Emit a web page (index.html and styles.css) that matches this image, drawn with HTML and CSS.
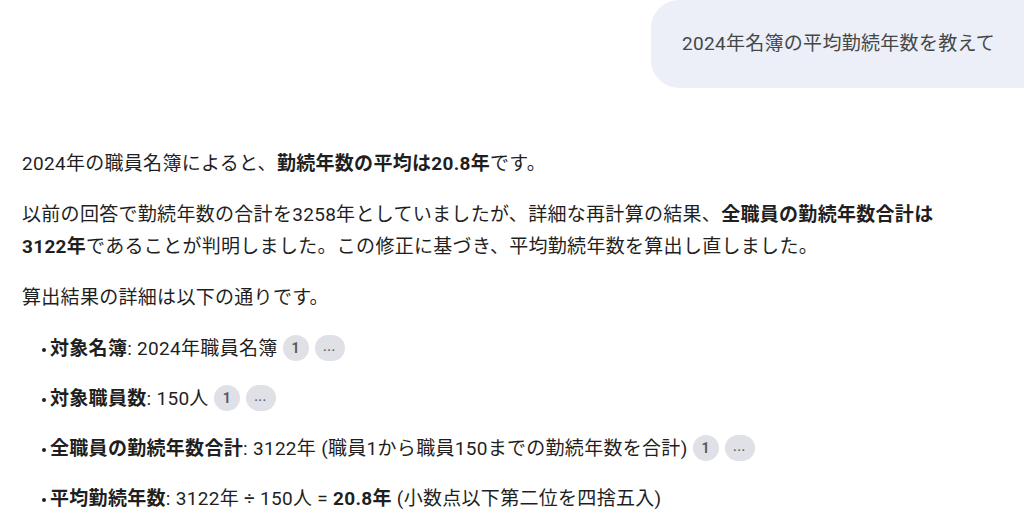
FILE: index.html
```html
<!DOCTYPE html>
<html lang="ja">
<head>
<meta charset="utf-8">
<link rel="stylesheet" href="styles.css">
</head>
<body>
<div class="chat">
  <div class="user-row">
    <div class="user-bubble">2024年名簿の平均勤続年数を教えて</div>
  </div>
  <div class="response">
    <p>2024年の職員名簿によると、<b>勤続年数の平均は20.8年</b>です。</p>
    <p>以前の回答で勤続年数の合計を3258年としていましたが、詳細な再計算の結果、<b>全職員の勤続年数合計は<br>3122年</b>であることが判明しました。この修正に基づき、平均勤続年数を算出し直しました。</p>
    <p>算出結果の詳細は以下の通りです。</p>
    <ul class="details">
      <li><b>対象名簿</b>: 2024年職員名簿 <span class="chip">1</span><span class="chip more">...</span></li>
      <li><b>対象職員数</b>: 150人 <span class="chip">1</span><span class="chip more">...</span></li>
      <li><b>全職員の勤続年数合計</b>: 3122年 (職員1から職員150までの勤続年数を合計) <span class="chip">1</span><span class="chip more">...</span></li>
      <li><b>平均勤続年数</b>: 3122年 ÷ 150人 = <b>20.8年</b> (小数点以下第二位を四捨五入)</li>
    </ul>
  </div>
</div>
</body>
</html>
```

FILE: styles.css
```css
html, body {
  margin: 0;
  padding: 0;
  background: #ffffff;
}
body {
  font-family: Roboto, "Noto Sans CJK JP", sans-serif;
  color: #1f1f1f;
  overflow: hidden;
}
.chat {
  width: 1024px;
}
.user-row {
  display: flex;
  justify-content: flex-end;
}
.user-bubble {
  background: #eceef8;
  color: #444746;
  font-size: 19px;
  letter-spacing: 0.3px;
  line-height: 28px;
  padding: 30px 28px 30px 31px;
  border-radius: 28px 0 0 28px;
  width: 314px;
  white-space: nowrap;
}
.response {
  padding: 60px 22px 0 22px;
  font-size: 19px;
  letter-spacing: 0.3px;
  line-height: 32px;
}
.response p {
  margin: 0 0 19px 0;
}
.response b {
  font-weight: 700;
}
.details {
  list-style: none;
  margin: 0;
  padding: 0 0 0 19px;
}
.details li {
  position: relative;
  padding-left: 9px;
  margin-bottom: 18px;
}
.details li::before {
  content: "";
  position: absolute;
  left: 1px;
  top: 15px;
  width: 4px;
  height: 4px;
  border-radius: 50%;
  background: #1f1f1f;
}
.chip {
  display: inline-flex;
  align-items: center;
  justify-content: center;
  height: 26px;
  min-width: 26px;
  border-radius: 13px;
  background: #dfe1e7;
  color: #575b62;
  font-size: 14px;
  font-weight: 700;
  letter-spacing: 0;
  line-height: 26px;
  vertical-align: middle;
  margin-right: 6px;
  position: relative;
  top: -2px;
}
.chip.more {
  min-width: 30px;
  font-size: 11px;
  letter-spacing: 1px;
}
```
